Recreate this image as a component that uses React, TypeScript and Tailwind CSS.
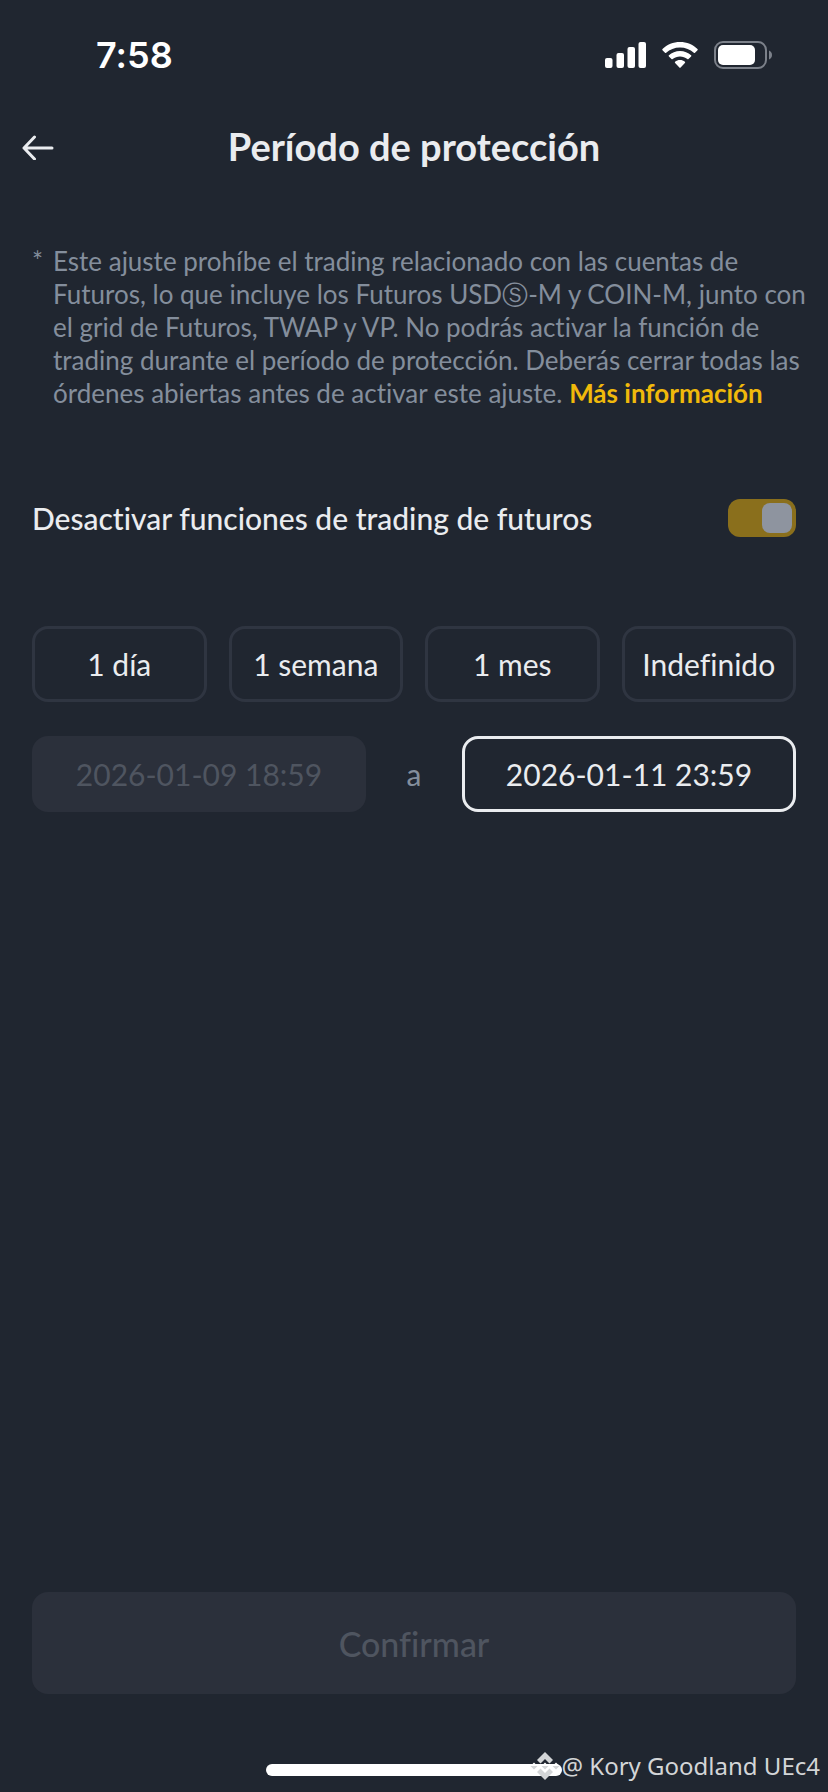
import { useState } from 'react';

const durations = ['1 día', '1 semana', '1 mes', 'Indefinido'];

function StatusBar() {
  return (
    <div className="flex h-24 items-center justify-between pt-3.5 pr-14 pl-24 text-white">
      <span className="font-['Inter',sans-serif] text-4xl font-semibold">7:58</span>
      <div className="flex items-center gap-4">
        <svg width="42" height="28" viewBox="0 0 42 28" fill="currentColor" aria-hidden="true">
          <rect x="1" y="17" width="7.5" height="10" rx="2" />
          <rect x="12.5" y="12" width="7.5" height="15" rx="2" />
          <rect x="23.5" y="6" width="7.5" height="21" rx="2" />
          <rect x="34.5" y="1" width="7.5" height="26" rx="2" />
        </svg>
        <svg width="36" height="28" viewBox="0 0 36 28" fill="currentColor" aria-hidden="true">
          <path d="M18 1C11.2 1 5 3.6.5 8.1c-.4.4-.4.8 0 1.2l2.5 2.5c.4.4.8.4 1.2 0C7.8 8.4 12.6 6.4 18 6.4s10.2 2 13.8 5.4c.4.4.8.4 1.2 0l2.5-2.5c.4-.4.4-.8 0-1.2C31 3.6 24.8 1 18 1z" />
          <path d="M18 10c-4.3 0-8.2 1.6-11.1 4.3-.4.4-.4.8 0 1.2l2.6 2.6c.4.4.8.3 1.2 0 2-1.700 4.500-2.700 7.300-2.700s5.300 1 7.300 2.700c.4.3.8.4 1.2 0l2.6-2.6c.4-.4.4-.8 0-1.2C26.2 11.6 22.3 10 18 10z" />
          <path d="M18 19c-1.9 0-3.6.6-4.9 1.700-.4.3-.4.8 0 1.2l4.3 4.7c.4.4.8.4 1.2 0l4.3-4.7c.4-.4.4-.9 0-1.2C21.6 19.6 19.9 19 18 19z" />
        </svg>
        <svg width="58" height="28" viewBox="0 0 58 28" aria-hidden="true">
          <rect x="1" y="1" width="51" height="26" rx="8" fill="none" stroke="#7c818a" strokeWidth="2" />
          <rect x="4" y="4" width="37" height="20" rx="5" fill="currentColor" />
          <path d="M55 9.5c1.8.8 3 2.5 3 4.500s-1.200 3.700-3 4.500z" fill="#7c818a" />
        </svg>
      </div>
    </div>
  );
}

function Watermark() {
  return (
    <div className="absolute right-2 bottom-2.5 flex items-center text-[#d3d5d7]">
      <svg width="34" height="28" viewBox="0 0 34 28" fill="currentColor" aria-hidden="true">
        <path d="M17 0l8 8-3.500 3.500L17 7l-4.500 4.500L9 8z" />
        <path d="M17 28l-8-8 3.500-3.500L17 21l4.500-4.500L25 20z" />
        <path d="M17 17.500l-3.500-3.500h7zM6 17.500L2.500 14h7zM28 17.500l-3.500-3.500h7z" />
        <path d="M17 10.500l3.500 3.500h-7zM6 10.500L9.500 14h-7zM28 10.500l3.500 3.500h-7z" fill="#ffffff" />
      </svg>
      <span className="font-['Noto_Sans',sans-serif] text-2xl">@ Kory Goodland UEc4</span>
    </div>
  );
}

export default function App() {
  const [enabled, setEnabled] = useState(true);
  const [end, setEnd] = useState('2026-01-11 23:59');

  return (
    <div className="relative flex min-h-screen flex-col bg-[#202630] font-['Lato','Noto_Sans',sans-serif] text-[#eaecef] [font-variant-ligatures:none]">
      <StatusBar />

      <header className="grid h-[102px] grid-cols-[3rem_1fr_3rem] items-center px-3.5">
        <button type="button" aria-label="Volver" className="flex size-12 items-center justify-center">
          <svg width="32" height="26" viewBox="0 0 32 26" fill="none" stroke="currentColor" strokeWidth="3" strokeLinecap="round" strokeLinejoin="round" aria-hidden="true">
            <path d="M30 14H2M12.5 3L2 14l10.5 11" />
          </svg>
        </button>
        <h1 className="pb-0.5 text-center text-[38px]/[44px] font-bold">Período de protección</h1>
      </header>

      <main className="flex flex-1 flex-col px-8 pb-[98px]">
        <div className="mt-[47px] flex text-[26px]/[33px] text-[#848e9c]">
          <span className="w-[21px] shrink-0">*</span>
          <p className="-mr-3">
            Este ajuste prohíbe el trading relacionado con las cuentas de Futuros, lo que incluye los Futuros USDⓈ-M y COIN-M, junto con el grid de Futuros, TWAP y VP. No podrás activar la función de trading durante el período de protección. Deberás cerrar todas las órdenes abiertas antes de activar este ajuste.{' '}
            <a href="#info" className="font-bold text-[#f0b90b]">Más información</a>
          </p>
        </div>

        <label className="mt-[88px] flex items-center justify-between">
          <span className="text-[30px]/10 font-medium">Desactivar funciones de trading de futuros</span>
          <span className="relative flex">
            <input
              type="checkbox"
              role="switch"
              checked={enabled}
              onChange={(e) => setEnabled(e.target.checked)}
              className="peer h-[38px] w-[68px] appearance-none rounded-xl bg-[#3a404b] checked:bg-[#8a6f1c]"
            />
            <span className="pointer-events-none absolute top-1 left-1 size-[30px] rounded-lg bg-[#8e949f] peer-checked:right-1 peer-checked:left-auto" />
          </span>
        </label>

        <div className="mt-[88px] grid grid-cols-4 gap-[22px]">
          {durations.map((label) => (
            <button key={label} type="button" className="h-[76px] rounded-2xl border-3 border-[#2f3541] text-[30px]">
              {label}
            </button>
          ))}
        </div>

        <div className="mt-[34px] grid grid-cols-[1fr_96px_1fr] items-center text-center text-[30px]">
          <input aria-label="Inicio" disabled value="2026-01-09 18:59" className="h-[76px] w-full rounded-2xl bg-[#2b303b] text-center text-[#4f5560]" />
          <span className="text-[#848e9c]">a</span>
          <input aria-label="Fin" value={end} onChange={(e) => setEnd(e.target.value)} className="h-[76px] w-full rounded-2xl border-3 border-[#eaecef] text-center" />
        </div>

        <button type="button" disabled className="mt-auto h-[102px] rounded-2xl bg-[#2b303b] text-[34px] font-medium text-[#4f5560]">
          Confirmar
        </button>
      </main>

      <div className="absolute bottom-4 left-1/2 h-3 w-[296px] -translate-x-1/2 rounded-full bg-white" />
      <Watermark />
    </div>
  );
}
